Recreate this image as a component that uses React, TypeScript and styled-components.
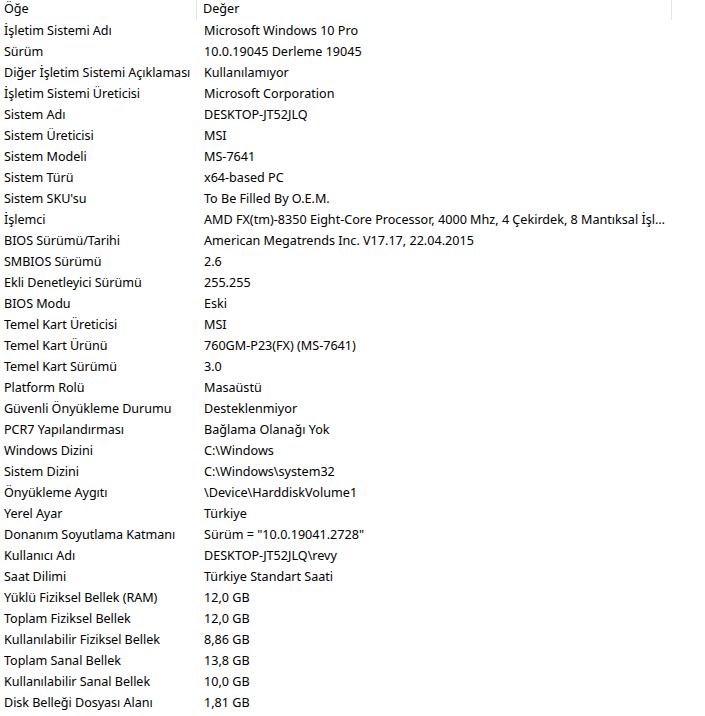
import React from "react";
import styled, { createGlobalStyle } from "styled-components";

const Global = createGlobalStyle`
  html, body { margin: 0; padding: 0; background: #ffffff; }
  body { font-family: "Noto Sans", "Segoe UI", sans-serif; font-size: 12.6px; color: #000; }
`;

const rows: [string, string][] = [
  ["İşletim Sistemi Adı", "Microsoft Windows 10 Pro"],
  ["Sürüm", "10.0.19045 Derleme 19045"],
  ["Diğer İşletim Sistemi Açıklaması", "Kullanılamıyor"],
  ["İşletim Sistemi Üreticisi", "Microsoft Corporation"],
  ["Sistem Adı", "DESKTOP-JT52JLQ"],
  ["Sistem Üreticisi", "MSI"],
  ["Sistem Modeli", "MS-7641"],
  ["Sistem Türü", "x64-based PC"],
  ["Sistem SKU'su", "To Be Filled By O.E.M."],
  ["İşlemci", "AMD FX(tm)-8350 Eight-Core Processor, 4000 Mhz, 4 Çekirdek, 8 Mantıksal İşlemci"],
  ["BIOS Sürümü/Tarihi", "American Megatrends Inc. V17.17, 22.04.2015"],
  ["SMBIOS Sürümü", "2.6"],
  ["Ekli Denetleyici Sürümü", "255.255"],
  ["BIOS Modu", "Eski"],
  ["Temel Kart Üreticisi", "MSI"],
  ["Temel Kart Ürünü", "760GM-P23(FX) (MS-7641)"],
  ["Temel Kart Sürümü", "3.0"],
  ["Platform Rolü", "Masaüstü"],
  ["Güvenli Önyükleme Durumu", "Desteklenmiyor"],
  ["PCR7 Yapılandırması", "Bağlama Olanağı Yok"],
  ["Windows Dizini", "C:\\Windows"],
  ["Sistem Dizini", "C:\\Windows\\system32"],
  ["Önyükleme Aygıtı", "\\Device\\HarddiskVolume1"],
  ["Yerel Ayar", "Türkiye"],
  ["Donanım Soyutlama Katmanı", "Sürüm = \"10.0.19041.2728\""],
  ["Kullanıcı Adı", "DESKTOP-JT52JLQ\\revy"],
  ["Saat Dilimi", "Türkiye Standart Saati"],
  ["Yüklü Fiziksel Bellek (RAM)", "12,0 GB"],
  ["Toplam Fiziksel Bellek", "12,0 GB"],
  ["Kullanılabilir Fiziksel Bellek", "8,86 GB"],
  ["Toplam Sanal Bellek", "13,8 GB"],
  ["Kullanılabilir Sanal Bellek", "10,0 GB"],
  ["Disk Belleği Dosyası Alanı", "1,81 GB"],
];

const List = styled.div`
  width: 705px;
  height: 716px;
  overflow: hidden;
  background: #fff;
`;

const Grid = styled.div`
  display: grid;
  grid-template-columns: 197px 475px 1fr;
`;

const HeaderCell = styled.div<{ $pad: number }>`
  height: 20px;
  line-height: 17px;
  padding-left: ${(p) => p.$pad}px;
  box-sizing: border-box;
  border-right: 1px solid #e5e5e5;
  white-space: nowrap;
`;

const NameCell = styled.div`
  height: 21px;
  line-height: 21px;
  padding-left: 4px;
  box-sizing: border-box;
  white-space: nowrap;
  letter-spacing: -0.05px;
`;

const ValueCell = styled.div`
  height: 21px;
  line-height: 21px;
  padding-left: 7px;
  padding-right: 6px;
  box-sizing: border-box;
  white-space: nowrap;
  overflow: hidden;
  text-overflow: ellipsis;
`;

const Spacer = styled.div``;

export default function App() {
  return (
    <>
      <Global />
      <List>
        <Grid>
          <HeaderCell $pad={4}>Öğe</HeaderCell>
          <HeaderCell $pad={6}>Değer</HeaderCell>
          <Spacer />
          {rows.map(([k, v]) => (
            <React.Fragment key={k}>
              <NameCell>{k}</NameCell>
              <ValueCell>{v}</ValueCell>
              <Spacer />
            </React.Fragment>
          ))}
        </Grid>
      </List>
    </>
  );
}
